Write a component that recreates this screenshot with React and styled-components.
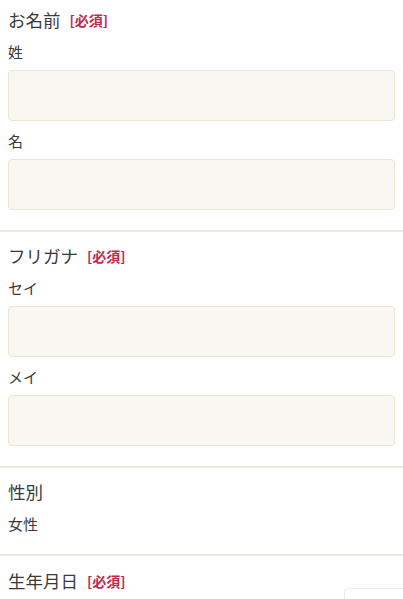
import styled, { createGlobalStyle } from "styled-components";

const GlobalStyle = createGlobalStyle`
  html, body {
    margin: 0;
    padding: 0;
    background: #ffffff;
  }
  body {
    font-family: "Noto Sans CJK JP", "Noto Sans", sans-serif;
    color: #3a3a3a;
    overflow: hidden;
  }
`;

const sections = [
  {
    title: "お名前",
    required: true,
    fields: [{ label: "姓" }, { label: "名" }],
  },
  {
    title: "フリガナ",
    required: true,
    fields: [{ label: "セイ" }, { label: "メイ" }],
  },
  {
    title: "性別",
    value: "女性",
  },
  {
    title: "生年月日",
    required: true,
    last: true,
  },
];

const App = () => {
  return (
    <Page>
      <GlobalStyle />
      {sections.map((s) => (
        <Section key={s.title} $last={s.last}>
          <Heading>
            {s.title}
            {s.required && <Required>[必須]</Required>}
          </Heading>
          {s.fields &&
            s.fields.map((f) => (
              <Field key={f.label}>
                <Label>{f.label}</Label>
                <Input type="text" />
              </Field>
            ))}
          {s.value && <Value>{s.value}</Value>}
        </Section>
      ))}
      <FloatBox />
    </Page>
  );
};

export default App;

const Page = styled.div`
  width: 403px;
  height: 599px;
  overflow: hidden;
  position: relative;
`;

const Section = styled.section`
  padding: ${(p) => (p.$last ? "13px 8px 0" : "12px 8px 20px")};
  border-bottom: ${(p) => (p.$last ? "none" : "2px solid #f0e9dd")};
  display: flex;
  flex-direction: column;
  gap: 10px;

  &:first-child {
    padding-top: 8px;
  }
`;

const Heading = styled.h2`
  margin: 0;
  height: 24px;
  line-height: 24px;
  font-size: 17.5px;
  font-weight: 400;
  color: #3a3a3a;
  display: flex;
  align-items: center;
`;

const Required = styled.span`
  margin-left: 9px;
  font-size: 14px;
  font-weight: 700;
  color: #c0294f;
`;

const Field = styled.div`
  display: flex;
  flex-direction: column;
  gap: 8px;
`;

const Label = styled.label`
  height: 20px;
  line-height: 20px;
  font-size: 15px;
  color: #3a3a3a;
`;

const Input = styled.input`
  box-sizing: border-box;
  width: 100%;
  height: 51px;
  margin: 0;
  background: #f9f7f2;
  border: 1px solid #ebe4d4;
  border-radius: 4px;
  outline: none;
`;

const Value = styled.div`
  height: 20px;
  line-height: 20px;
  font-size: 15px;
  color: #3a3a3a;
`;

const FloatBox = styled.div`
  position: absolute;
  left: 344px;
  top: 588px;
  width: 80px;
  height: 30px;
  background: #ffffff;
  border: 1px solid #ebebeb;
  border-radius: 4px 0 0 0;
`;
